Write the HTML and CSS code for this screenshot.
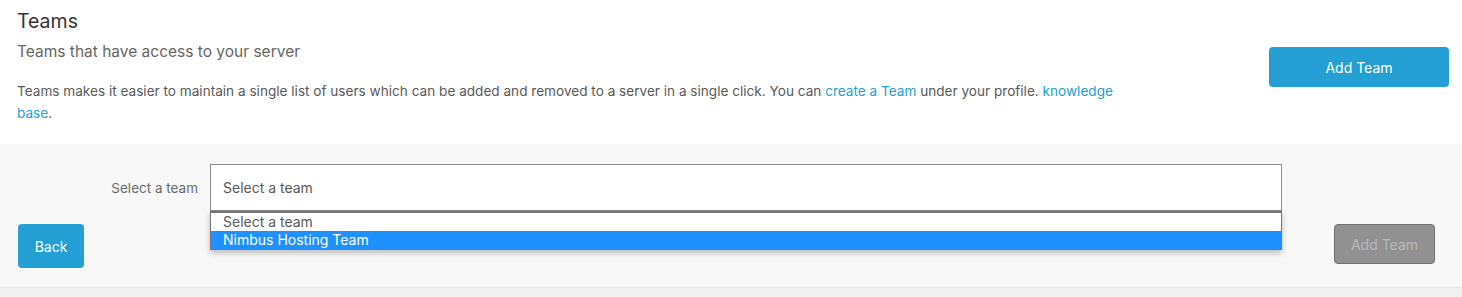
FILE: index.html
```html
<!DOCTYPE html>
<html lang="en">
<head>
    <meta charset="UTF-8">
    <meta name="viewport" content="width=device-width, initial-scale=1.0">
    <title>Teams</title>
    <link rel="stylesheet" href="styles.css">
</head>
<body>
    <div class="header">
        <div class="intro">
            <h2>Teams</h2>
            <p class="subtitle">Teams that have access to your server</p>
            <p class="help">Teams makes it easier to maintain a single list of users which can be added and removed to a server in a single click. You can <a href="#">create a Team</a> under your profile. <a href="#">knowledge base</a>.</p>
        </div>
        <div class="actions">
            <button class="button wide">Add Team</button>
        </div>
    </div>

    <div class="panel">
        <form class="team-form">
            <div class="field">
                <label for="team">Select a team</label>
                <div class="select-wrap">
                    <div class="select" id="team">Select a team</div>
                    <!-- открытый список -->
                    <ul class="options">
                        <li>Select a team</li>
                        <li class="active">Nimbus Hosting Team</li>
                    </ul>
                </div>
            </div>
            <div class="buttons">
                <button type="button" class="button back">Back</button>
                <button type="button" class="button disabled">Add Team</button>
            </div>
        </form>
    </div>
</body>
</html>
```

FILE: styles.css
```css
body {
    font-family: Inter, "Open Sans", sans-serif;
    background-color: #f0f0f0;
    color: #555;
    margin: 0;
}
.header {
    display: flex;
    justify-content: space-between;
    align-items: flex-start;
    background: #fff;
    padding: 0 13px 0 17px;
    height: 144px;
}
.intro {
    width: 1115px;
}
h2 {
    margin: 8px 0 0;
    font-size: 19.5px;
    font-weight: 400;
    color: #333;
    line-height: 26px;
}
.subtitle {
    margin: 7px 0 0;
    font-size: 15.5px;
    color: #666;
    line-height: 22px;
}
.help {
    margin: 17px 0 0;
    font-size: 13.6px;
    line-height: 22px;
    color: #595959;
}
a {
    color: #239fd4;
    text-decoration: none;
}
.actions {
    margin-top: 47px;
}
.button {
    font-family: inherit;
    font-size: 14px;
    color: #fff;
    background-color: #239fd4;
    border: none;
    border-radius: 4px;
    cursor: pointer;
}
.wide {
    width: 180px;
    height: 40px;
}
.panel {
    background: #f8f8f8;
    border-bottom: 1px solid #e8e8e8;
    padding: 20px 27px 19px 18px;
    margin-bottom: 10px;
}
.field {
    display: flex;
    align-items: center;
}
.field label {
    width: 180px;
    text-align: right;
    padding-right: 12px;
    font-size: 13.5px;
    color: #6a6a6a;
}
.select-wrap {
    position: relative;
    width: 1072px;
}
.select {
    box-sizing: border-box;
    height: 47px;
    border: 1px solid #8c8c8c;
    background: #fff;
    padding: 0 12px;
    line-height: 45px;
    font-size: 14px;
    color: #5a5a5a;
}
.options {
    position: absolute;
    top: 47px;
    left: 0;
    right: 0;
    margin: 0;
    padding: 0;
    list-style: none;
    background: #fff;
    border: 1px solid #767676;
    border-top-width: 2px;
    box-shadow: 0 3px 6px rgba(0, 0, 0, 0.25);
    z-index: 2;
}
.options li {
    height: 18px;
    line-height: 18px;
    padding: 0 12px;
    font-size: 14px;
    color: #5a5a5a;
}
.options li.active {
    background: #1e90ff;
    color: #fff;
}
.buttons {
    display: flex;
    justify-content: space-between;
    align-items: flex-start;
    margin-top: 13px;
}
.back {
    width: 66px;
    height: 44px;
}
.disabled {
    width: 101px;
    height: 40px;
    background: #919191;
    border: 1px solid #707070;
    color: #b9b9b9;
    cursor: default;
}
```
